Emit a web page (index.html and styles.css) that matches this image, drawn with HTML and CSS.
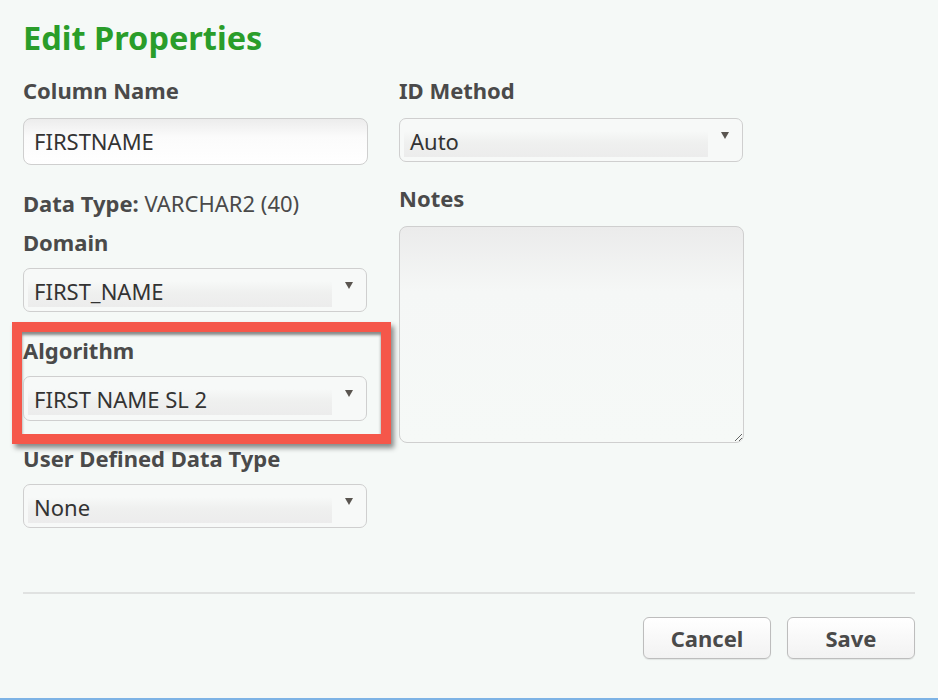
FILE: index.html
```html
<!DOCTYPE html>
<html>
<head>
<meta charset="utf-8">
<link rel="stylesheet" href="styles.css">
</head>
<body>
<div class="dialog">
  <h1 class="title">Edit Properties</h1>
  <div class="columns">
    <div class="col">
      <div class="label first">Column Name</div>
      <div class="input">FIRSTNAME</div>
      <div class="datatype"><b>Data Type:</b> VARCHAR2 (40)</div>
      <div class="label">Domain</div>
      <div class="select"><span class="value">FIRST_NAME</span><span class="arrow"></span></div>
      <div class="highlight-group">
        <div class="highlight"></div>
        <div class="label">Algorithm</div>
        <div class="select tall"><span class="value">FIRST NAME SL 2</span><span class="arrow"></span></div>
      </div>
      <div class="label">User Defined Data Type</div>
      <div class="select last"><span class="value">None</span><span class="arrow"></span></div>
    </div>
    <div class="col">
      <div class="label first">ID Method</div>
      <div class="select id"><span class="value">Auto</span><span class="arrow"></span></div>
      <div class="label notes-label">Notes</div>
      <textarea class="notes"></textarea>
    </div>
  </div>
  <div class="rule"></div>
  <div class="actions">
    <button class="btn">Cancel</button>
    <button class="btn">Save</button>
  </div>
</div>
<div class="bottom-line"></div>
</body>
</html>
```
FILE: styles.css
```css
html, body {
  margin: 0;
  padding: 0;
  height: 700px;
  overflow: hidden;
}
body {
  background: #f5f9f7;
  font-family: "Noto Sans", "Open Sans", sans-serif;
  color: #4a4a4a;
  position: relative;
}
.dialog {
  padding: 18px 23px 0 23px;
  width: 892px;
}
.title {
  margin: 0;
  font-size: 32.5px;
  line-height: 40px;
  font-weight: 700;
  color: #2a9d2a;
}
.columns {
  display: flex;
  gap: 31px;
  margin-top: 21px;
}
.col {
  display: flex;
  flex-direction: column;
  width: 345px;
}
.label {
  font-size: 22px;
  font-weight: 700;
  line-height: 22px;
  color: #4a4a4a;
  margin-bottom: 15px;
}
.label.first {
  margin-bottom: 17px;
}
.input {
  box-sizing: border-box;
  height: 47px;
  width: 345px;
  border: 1px solid #cfcfcf;
  border-radius: 8px;
  background: linear-gradient(to bottom, #ececec 0, #fbfbfb 40%, #ffffff 100%);
  font-size: 22px;
  line-height: 45px;
  padding-left: 10px;
  color: #333;
  margin-bottom: 26px;
}
.datatype {
  font-size: 22px;
  line-height: 24px;
  margin-bottom: 16px;
  color: #4a4a4a;
}
.datatype b {
  font-weight: 700;
}
.select {
  position: relative;
  box-sizing: border-box;
  height: 44px;
  width: 344px;
  border: 1px solid #cfcfcf;
  border-radius: 7px;
  background: #f7f9f8;
  margin-bottom: 27px;
  padding: 12px 0 3px 4px;
}
.select.tall {
  height: 45px;
  margin-bottom: 26px;
}
.select .value {
  display: block;
  width: 304px;
  height: 26px;
  box-sizing: border-box;
  padding-left: 6px;
  font-size: 22px;
  line-height: 20px;
  color: #333;
  background: linear-gradient(to bottom, rgba(240,242,241,0) 0, #eff0ef 45%, #ececec 100%);
}
.select .arrow {
  position: absolute;
  right: 13px;
  top: 13px;
  width: 0;
  height: 0;
  border-left: 4.5px solid transparent;
  border-right: 4.5px solid transparent;
  border-top: 7px solid #5a5550;
}
.select.last {
  margin-bottom: 0;
}
.select.id {
  margin-bottom: 25px;
}
.notes-label {
  margin-bottom: 17px;
}
.highlight-group {
  position: relative;
}
.highlight {
  position: absolute;
  left: -11px;
  top: -17px;
  width: 379px;
  height: 122px;
  box-sizing: border-box;
  border: 10px solid #f5574a;
  box-shadow: 3px 4px 5px rgba(0,0,0,0.45), inset 0 3px 3px rgba(0,0,0,0.45);
  pointer-events: none;
}
.notes {
  box-sizing: border-box;
  width: 345px;
  height: 217px;
  margin: 0;
  border: 1px solid #cfcfcf;
  border-radius: 8px;
  background: linear-gradient(to bottom, #ebebeb 0, #f5f7f6 30%, #f6f9f7 100%);
  resize: both;
  font-family: inherit;
}
.rule {
  height: 0;
  border-top: 2px solid #e0e2e1;
  margin-top: 64px;
  width: 892px;
}
.actions {
  display: flex;
  justify-content: flex-end;
  gap: 16px;
  margin-top: 23px;
}
.btn {
  width: 128px;
  height: 42px;
  border: 1px solid #bdbdbd;
  border-radius: 6px;
  background: linear-gradient(to bottom, #ffffff 0, #f2f2f2 100%);
  font-family: "Noto Sans", "Open Sans", sans-serif;
  font-size: 22px;
  font-weight: 700;
  color: #4a4a4a;
  padding: 0;
  box-shadow: 0 1px 1px rgba(0,0,0,0.08);
}
.bottom-line {
  position: absolute;
  left: 0;
  right: 0;
  bottom: 0;
  height: 2px;
  background: #7db3e5;
}
```
